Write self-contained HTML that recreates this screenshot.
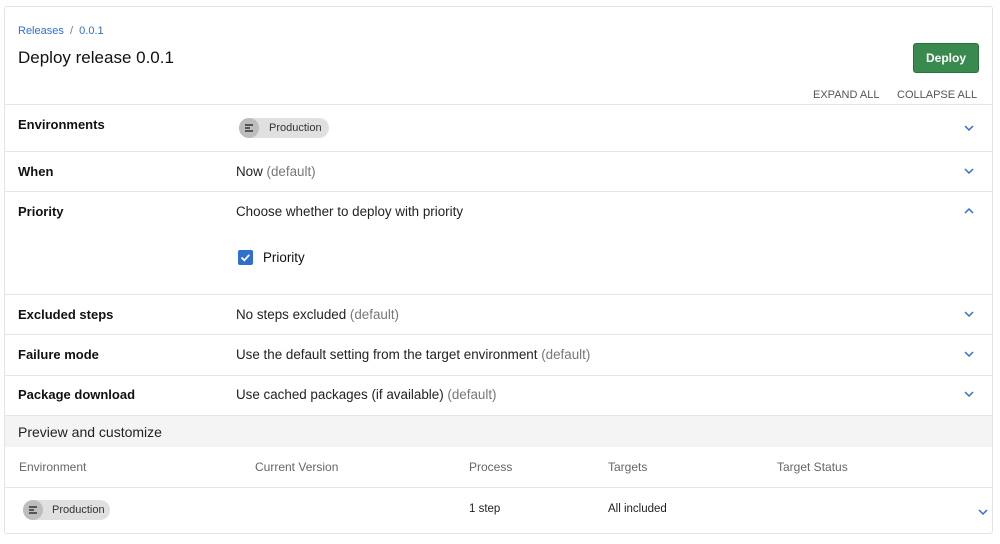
<!DOCTYPE html>
<html><head><style>
*{margin:0;padding:0;box-sizing:border-box}
body{width:1000px;height:544px;background:#fff;font-family:"Liberation Sans",Arial,sans-serif;color:#111;position:relative;overflow:hidden}
.a{position:absolute;white-space:nowrap}
.card{position:absolute;left:4px;top:6px;width:989px;height:528px;border:1px solid #e3e3e3;border-radius:3px}
.hl{position:absolute;left:5px;width:987px;height:1px;background:#e6e6e6}
.lbl{font-size:13px;font-weight:bold;left:18px}
.val{font-size:13.4px;left:236px;color:#222}
.def{color:#777}
.chev{position:absolute;width:12px;height:8px}
.chip{position:absolute;height:20px;border-radius:10px;background:#e0e0e0;font-size:11px;color:#333;line-height:20px}
.chip .ic{position:absolute;left:0;top:0;width:20px;height:20px;border-radius:10px;background:#bdbdbd}
.th{font-size:12px;color:#666}
</style></head><body>
<div class="card"></div>
<div class="a" style="left:18px;top:25px;font-size:11px;color:#2f6fd0">Releases <span style="color:#777">&nbsp;/&nbsp;</span> 0.0.1</div>
<div class="a" style="left:18px;top:48px;font-size:17px;color:#111">Deploy release 0.0.1</div>
<div class="a" style="left:913px;top:43px;width:66px;height:30px;background:#388a4f;border:1px solid #2c7040;border-radius:3px;color:#fff;font-size:12px;font-weight:bold;text-align:center;line-height:28px">Deploy</div>
<div class="a" style="left:813px;top:89px;font-size:11px;color:#555">EXPAND ALL</div>
<div class="a" style="left:897px;top:89px;font-size:11px;color:#555">COLLAPSE ALL</div>

<div class="hl" style="top:104px"></div>
<div class="a lbl" style="top:117px">Environments</div>
<div class="chip" style="left:239px;top:118px;width:90px"><div class="ic"><svg width="20" height="20"><path d="M6 7h8M6 10h5M6 13h8" stroke="#333" stroke-width="1.5"/></svg></div><span style="position:absolute;left:30px">Production</span></div>

<div class="hl" style="top:151px"></div>
<div class="a lbl" style="top:164px">When</div>
<div class="a val" style="top:164px">Now <span class="def">(default)</span></div>
<div class="hl" style="top:191px"></div>
<div class="a lbl" style="top:204px">Priority</div>
<div class="a val" style="top:204px">Choose whether to deploy with priority</div>
<div class="a" style="left:238px;top:250px;width:15px;height:15px;background:#2f6fd0;border-radius:2px"><svg width="15" height="15"><path d="M3.5 7.5l2.8 2.8 5-5.5" stroke="#fff" stroke-width="1.8" fill="none"/></svg></div>
<div class="a" style="left:263px;top:250px;font-size:13.4px">Priority</div>
<div class="hl" style="top:294px"></div>
<div class="a lbl" style="top:307px">Excluded steps</div>
<div class="a val" style="top:307px">No steps excluded <span class="def">(default)</span></div>
<div class="hl" style="top:334px"></div>
<div class="a lbl" style="top:347px">Failure mode</div>
<div class="a val" style="top:347px">Use the default setting from the target environment <span class="def">(default)</span></div>
<div class="hl" style="top:375px"></div>
<div class="a lbl" style="top:387px">Package download</div>
<div class="a val" style="top:387px">Use cached packages (if available) <span class="def">(default)</span></div>
<div class="hl" style="top:415px"></div>
<div class="a" style="left:5px;top:416px;width:987px;height:31px;background:#f4f4f4"></div>
<div class="a" style="left:18px;top:424px;font-size:14px;color:#222">Preview and customize</div>
<div class="a th" style="left:19px;top:460px">Environment</div>
<div class="a th" style="left:255px;top:460px">Current Version</div>
<div class="a th" style="left:469px;top:460px">Process</div>
<div class="a th" style="left:608px;top:460px">Targets</div>
<div class="a th" style="left:777px;top:460px">Target Status</div>
<div class="hl" style="top:487px"></div>
<div class="chip" style="left:23px;top:500px;width:87px"><div class="ic"><svg width="20" height="20"><path d="M6 7h8M6 10h5M6 13h8" stroke="#333" stroke-width="1.5"/></svg></div><span style="position:absolute;left:29px">Production</span></div>
<div class="a" style="left:469px;top:503px;font-size:11.5px;color:#222">1 step</div>
<div class="a" style="left:608px;top:503px;font-size:11.5px;color:#222">All included</div>

<svg class="chev" style="left:963px;top:124px"><path d="M2 2l4 4 4-4" stroke="#2f6fd0" stroke-width="1.5" fill="none"/></svg>
<svg class="chev" style="left:963px;top:167px"><path d="M2 2l4 4 4-4" stroke="#2f6fd0" stroke-width="1.5" fill="none"/></svg>
<svg class="chev" style="left:963px;top:207px"><path d="M2 6l4-4 4 4" stroke="#2f6fd0" stroke-width="1.5" fill="none"/></svg>
<svg class="chev" style="left:963px;top:310px"><path d="M2 2l4 4 4-4" stroke="#2f6fd0" stroke-width="1.5" fill="none"/></svg>
<svg class="chev" style="left:963px;top:350px"><path d="M2 2l4 4 4-4" stroke="#2f6fd0" stroke-width="1.5" fill="none"/></svg>
<svg class="chev" style="left:963px;top:390px"><path d="M2 2l4 4 4-4" stroke="#2f6fd0" stroke-width="1.5" fill="none"/></svg>
<svg class="chev" style="left:977px;top:508px"><path d="M2 2l4 4 4-4" stroke="#2f6fd0" stroke-width="1.5" fill="none"/></svg>
</body></html>
